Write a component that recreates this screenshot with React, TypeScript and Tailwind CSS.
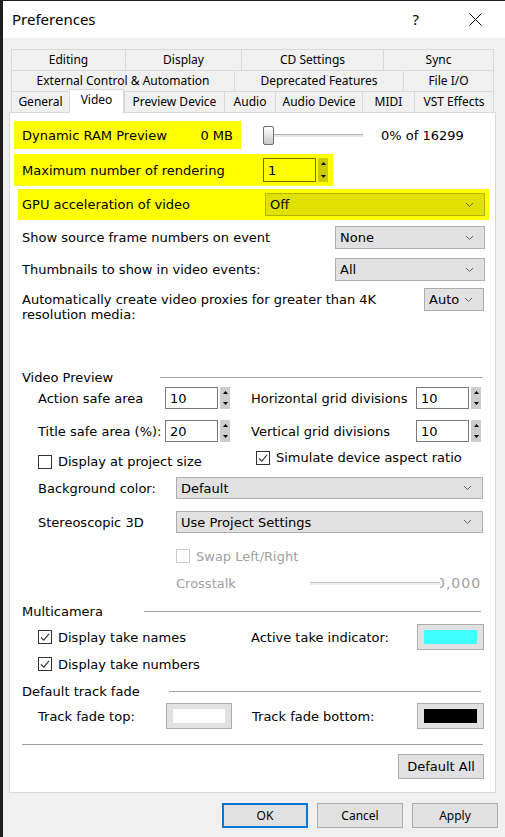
import type { ReactNode } from "react";

const ui = "font-['Noto_Sans',sans-serif]";
const txt = "font-['DejaVu_Sans',sans-serif] text-[13px] leading-[15px] text-black";
const dim = "font-['DejaVu_Sans',sans-serif] text-[13px] leading-[15px] text-[#a0a0a0]";

function Chevron() {
  return (
    <svg width="9" height="6" viewBox="0 0 9 6" className="shrink-0">
      <path d="M1 1 L4.5 4.5 L8 1" fill="none" stroke="#606060" strokeWidth="1" />
    </svg>
  );
}

function Dropdown({
  value,
  width,
  yellow,
  h = "h-[23px]",
}: {
  value: string;
  width: string;
  yellow?: boolean;
  h?: string;
}) {
  return (
    <div
      className={`${width} ${h} shrink-0 flex items-center justify-between pl-[4px] pr-[10px] border ${
        yellow ? "bg-[#e1e100] border-[#b4b400]" : "bg-[#e1e1e1] border-[#adadad]"
      } ${txt}`}
    >
      <span>{value}</span>
      <Chevron />
    </div>
  );
}

function Spinner({ yellow }: { yellow?: boolean }) {
  return (
    <div
      className={`w-[10px] self-stretch ml-[2px] flex flex-col items-center justify-between py-[4px] ${
        yellow ? "bg-[#cccc00]" : "bg-[#cdcdcd]"
      }`}
    >
      <svg width="5" height="3" viewBox="0 0 5 3">
        <path d="M2.5 0 L5 3 L0 3 Z" fill="#000" />
      </svg>
      <svg width="5" height="3" viewBox="0 0 5 3">
        <path d="M0 0 L5 0 L2.5 3 Z" fill="#000" />
      </svg>
    </div>
  );
}

function SpinBox({ value, yellow, h = "h-[22px]" }: { value: string; yellow?: boolean; h?: string }) {
  return (
    <div className={`flex ${h} shrink-0`}>
      <div
        className={`w-[53px] h-full border flex items-center pl-[4px] ${
          yellow ? "bg-[#ffff00] border-[#6e6e00]" : "bg-white border-[#7a7a7a]"
        } ${txt}`}
      >
        {value}
      </div>
      <Spinner yellow={yellow} />
    </div>
  );
}

function Check({ checked, disabled }: { checked?: boolean; disabled?: boolean }) {
  return (
    <div
      className={`w-[14px] h-[14px] shrink-0 border bg-white flex items-center justify-center ${
        disabled ? "border-[#cccccc]" : "border-[#333333]"
      }`}
    >
      {checked && (
        <svg width="12" height="12" viewBox="0 0 12 12">
          <path d="M2 6.5 L4.8 9.2 L10 2.8" fill="none" stroke="#333" strokeWidth="1.1" />
        </svg>
      )}
    </div>
  );
}

function ColorBox({ color, width }: { color: string; width: string }) {
  return (
    <div className={`${width} h-[26px] shrink-0 bg-[#e1e1e1] border border-[#adadad] px-[6px] py-[5px]`}>
      <div className={`w-full h-full ${color}`} />
    </div>
  );
}

function Group({ label, labelW, mr, mt }: { label: string; labelW: string; mr: string; mt: string }) {
  return (
    <div className={`flex items-center h-[14px] shrink-0 ml-[12px] ${mr} ${mt}`}>
      <div className={`${labelW} shrink-0 ${txt}`}>{label}</div>
      <div className="flex-1 h-px bg-[#a0a0a0]" />
    </div>
  );
}

function Tab({ w, children, active }: { w: string; children: ReactNode; active?: boolean }) {
  if (active)
    return (
      <div
        className={`${w} h-[24px] -mt-[2px] relative z-10 bg-white border border-b-0 border-[#d9d9d9] flex justify-center pt-[1px] text-[12px] text-black ${ui}`}
      >
        {children}
      </div>
    );
  return (
    <div
      className={`${w} h-[21px] border-t border-l border-[#d9d9d9] last:border-r flex items-center justify-center text-[12px] text-black ${ui}`}
    >
      {children}
    </div>
  );
}

function Btn({ children, primary }: { children: ReactNode; primary?: boolean }) {
  return (
    <div
      className={`w-[86px] h-[25px] bg-[#e1e1e1] flex items-center justify-center text-[12px] text-black ${ui} ${
        primary ? "border-2 border-[#0078d7]" : "border border-[#adadad]"
      }`}
    >
      {children}
    </div>
  );
}

export default function App() {
  return (
    <div className="w-[505px] h-[837px] bg-[#1e1e1e] flex overflow-hidden">
      <div className="ml-[3px] mt-[1px] flex-1 flex flex-col bg-[#f0f0f0]">
        {/* title bar */}
        <div className="h-[37px] shrink-0 bg-white flex items-center">
          <span className={`ml-[9px] text-[15px] text-black ${ui}`}>Preferences</span>
          <span className={`ml-auto text-[15px] text-black ${ui}`}>?</span>
          <svg width="13" height="13" viewBox="0 0 13 13" className="ml-[50px] mr-[23px]">
            <path d="M0.5 0.5 L12.5 12.5 M12.5 0.5 L0.5 12.5" stroke="#000" strokeWidth="1" />
          </svg>
        </div>

        {/* tabs */}
        <div className="ml-[8px] mt-[11px] w-[483px] shrink-0 flex flex-col">
          <div className="flex">
            <Tab w="w-[114px]">Editing</Tab>
            <Tab w="w-[116px]">Display</Tab>
            <Tab w="w-[142px]">CD Settings</Tab>
            <Tab w="w-[111px]">Sync</Tab>
          </div>
          <div className="flex">
            <Tab w="w-[223px]">External Control &amp; Automation</Tab>
            <Tab w="w-[169px]">Deprecated Features</Tab>
            <Tab w="w-[91px]">File I/O</Tab>
          </div>
          <div className="flex h-[21px]">
            <Tab w="w-[58px]">General</Tab>
            <Tab w="w-[55px]" active>
              Video
            </Tab>
            <Tab w="w-[100px]">Preview Device</Tab>
            <Tab w="w-[51px]">Audio</Tab>
            <Tab w="w-[87px]">Audio Device</Tab>
            <Tab w="w-[52px]">MIDI</Tab>
            <Tab w="w-[80px]">VST Effects</Tab>
          </div>
        </div>

        {/* panel */}
        <div className="ml-[6px] w-[487px] h-[681px] shrink-0 bg-white border border-[#d9d9d9] flex flex-col [&>*]:shrink-0">
          {/* highlighted rows */}
          <div className="mt-[8px] flex items-center">
            <div className={`ml-[4px] w-[227px] h-[28px] bg-[#ffff00] flex items-center justify-between px-[8px] ${txt}`}>
              <span>Dynamic RAM Preview</span>
              <span>0 MB</span>
            </div>
            <div className="ml-[22px] w-[100px] h-[19px] relative flex items-center">
              <div className="w-full h-[3px] border-t border-[#b0b0b0] bg-[#e7e7e7]" />
              <div className="absolute left-0 top-0 w-[11px] h-[19px] rounded-[2px] border border-[#6f6f6f] bg-gradient-to-b from-white to-[#c8c8c8]" />
            </div>
            <span className={`ml-[18px] ${txt}`}>0% of 16299</span>
          </div>

          <div className="mt-[5px] ml-[4px] w-[319px] h-[32px] bg-[#ffff00] flex items-center">
            <span className={`w-[249px] shrink-0 pl-[8px] ${txt}`}>Maximum number of rendering</span>
            <SpinBox value="1" yellow h="h-[24px]" />
          </div>

          <div className="mt-[3px] ml-[8px] w-[471px] h-[31px] bg-[#ffff00] flex items-center">
            <span className={`w-[247px] shrink-0 pl-[4px] ${txt}`}>GPU acceleration of video</span>
            <Dropdown value="Off" width="w-[220px]" yellow />
          </div>

          <div className="mt-[6px] ml-[12px] mr-[10px] flex items-center justify-between">
            <span className={txt}>Show source frame numbers on event</span>
            <Dropdown value="None" width="w-[150px]" />
          </div>

          <div className="mt-[9px] ml-[12px] mr-[10px] flex items-center justify-between">
            <span className={txt}>Thumbnails to show in video events:</span>
            <Dropdown value="All" width="w-[150px]" />
          </div>

          <div className="mt-[7px] ml-[12px] mr-[11px] h-[32px] flex items-start justify-between">
            <span className={`pt-[4px] ${txt} leading-[14px]`}>
              Automatically create video proxies for greater than 4K
              <br />
              resolution media:
            </span>
            <Dropdown value="Auto" width="w-[60px]" />
          </div>

          {/* video preview */}
          <Group label="Video Preview" labelW="w-[138px]" mr="mr-[12px]" mt="mt-[50px]" />

          <div className="mt-[3px] ml-[28px] flex items-center">
            <span className={`w-[127px] shrink-0 ${txt}`}>Action safe area</span>
            <SpinBox value="10" />
            <span className={`ml-[21px] w-[165px] shrink-0 ${txt}`}>Horizontal grid divisions</span>
            <SpinBox value="10" />
          </div>

          <div className="mt-[11px] ml-[28px] flex items-center">
            <span className={`w-[127px] shrink-0 whitespace-nowrap ${txt}`}>Title safe area (%):</span>
            <SpinBox value="20" />
            <span className={`ml-[21px] w-[165px] shrink-0 ${txt}`}>Vertical grid divisions</span>
            <SpinBox value="10" />
          </div>

          <div className="mt-[8px] ml-[28px] h-[18px] flex items-start">
            <div className="w-[218px] shrink-0 mt-[4px] flex items-center gap-[6px]">
              <Check />
              <span className={txt}>Display at project size</span>
            </div>
            <div className="flex items-center gap-[6px]">
              <Check checked />
              <span className={txt}>Simulate device aspect ratio</span>
            </div>
          </div>

          <div className="mt-[9px] ml-[28px] mr-[12px] flex items-center">
            <span className={`w-[138px] shrink-0 ${txt}`}>Background color:</span>
            <Dropdown value="Default" width="flex-1" h="h-[22px]" />
          </div>

          <div className="mt-[12px] ml-[28px] mr-[12px] flex items-center">
            <span className={`w-[138px] shrink-0 ${txt}`}>Stereoscopic 3D</span>
            <Dropdown value="Use Project Settings" width="flex-1" h="h-[22px]" />
          </div>

          <div className="mt-[16px] ml-[166px] h-[14px] flex items-center gap-[6px]">
            <Check disabled />
            <span className={dim}>Swap Left/Right</span>
          </div>

          <div className="mt-[12px] ml-[166px] h-[16px] flex items-center">
            <span className={`w-[134px] shrink-0 ${dim}`}>Crosstalk</span>
            <div className="w-[130px] h-[3px] border-t border-[#c8c8c8] bg-[#ececec]" />
            <div className="w-[45px] overflow-hidden flex">
              <span className={`whitespace-nowrap -ml-[4px] tracking-[1px] ${dim} text-[14px]`}>0,000</span>
            </div>
          </div>

          {/* multicamera */}
          <Group label="Multicamera" labelW="w-[122px]" mr="mr-[14px]" mt="mt-[13px]" />

          <div className="mt-[6px] ml-[28px] flex items-center">
            <div className="w-[213px] shrink-0 flex items-center gap-[6px]">
              <Check checked />
              <span className={txt}>Display take names</span>
            </div>
            <span className={`w-[166px] shrink-0 ${txt}`}>Active take indicator:</span>
            <ColorBox color="bg-[#40ffff]" width="w-[67px]" />
          </div>

          <div className="mt-[7px] ml-[28px] h-[14px] flex items-center gap-[6px]">
            <Check checked />
            <span className={txt}>Display take numbers</span>
          </div>

          <Group label="Default track fade" labelW="w-[147px]" mr="mr-[14px]" mt="mt-[13px]" />

          <div className="mt-[5px] ml-[28px] flex items-center">
            <span className={`w-[128px] shrink-0 ${txt}`}>Track fade top:</span>
            <ColorBox color="bg-white" width="w-[66px]" />
            <span className={`ml-[20px] w-[165px] shrink-0 ${txt}`}>Track fade bottom:</span>
            <ColorBox color="bg-black" width="w-[67px]" />
          </div>

          <div className="mt-[15px] mx-[12px] h-px bg-[#a0a0a0]" />

          <div className="mt-[9px] mr-[11px] flex justify-end">
            <div
              className={`w-[86px] h-[25px] bg-[#e1e1e1] border border-[#adadad] flex items-center justify-center ${txt}`}
            >
              Default All
            </div>
          </div>
        </div>

        {/* dialog buttons */}
        <div className="mt-[10px] mr-[7px] flex justify-end gap-[9px]">
          <Btn primary>OK</Btn>
          <Btn>Cancel</Btn>
          <Btn>Apply</Btn>
        </div>
      </div>
    </div>
  );
}
